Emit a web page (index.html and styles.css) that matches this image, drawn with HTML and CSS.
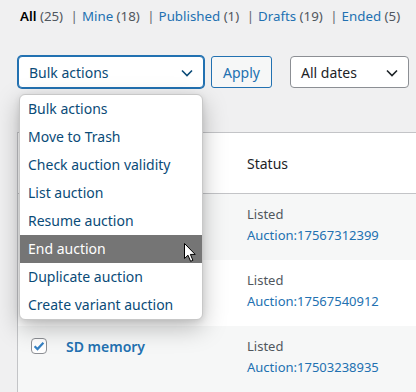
FILE: index.html
```html
<!DOCTYPE html>
<html lang="en">
<head>
  <meta charset="UTF-8" />
  <title>Auctions</title>
  <link rel="stylesheet" href="styles.css">
</head>
<body>
  <div class="wrap">

    <ul class="subsubsub">
      <li class="current"><a href="#">All <span class="count">(25)</span></a> |</li>
      <li><a href="#">Mine <span class="count">(18)</span></a> |</li>
      <li><a href="#">Published <span class="count">(1)</span></a> |</li>
      <li><a href="#">Drafts <span class="count">(19)</span></a> |</li>
      <li><a href="#">Ended <span class="count">(5)</span></a></li>
    </ul>

    <div class="tablenav">
      <div class="select select-focus">
        <span>Bulk actions</span>
        <svg class="chevron" width="14" height="14" viewBox="0 0 14 14"><path d="M2 4.5l5 5 5-5" fill="none" stroke="currentColor" stroke-width="1.6"/></svg>
      </div>
      <button class="button">Apply</button>
      <div class="select select-dates">
        <span>All dates</span>
        <svg class="chevron" width="14" height="14" viewBox="0 0 14 14"><path d="M2 4.5l5 5 5-5" fill="none" stroke="currentColor" stroke-width="1.6"/></svg>
      </div>
    </div>

    <table class="list">
      <thead>
        <tr>
          <th class="col-cb"></th>
          <th class="col-name"></th>
          <th class="col-status">Status</th>
        </tr>
      </thead>
      <tbody>
        <tr class="alt">
          <td class="col-cb"></td>
          <td class="col-name"></td>
          <td class="col-status">Listed<br><a href="#">Auction:17567312399</a></td>
        </tr>
        <tr>
          <td class="col-cb"></td>
          <td class="col-name"></td>
          <td class="col-status">Listed<br><a href="#">Auction:17567540912</a></td>
        </tr>
        <tr class="alt">
          <td class="col-cb">
            <span class="cb checked">
              <svg width="14" height="14" viewBox="0 0 14 14"><path d="M2.6 7.2l2.9 2.9 5.9-6.4" fill="none" stroke="#3582c4" stroke-width="2.2"/></svg>
            </span>
          </td>
          <td class="col-name"><a href="#">SD memory</a></td>
          <td class="col-status">Listed<br><a href="#">Auction:17503238935</a></td>
        </tr>
      </tbody>
    </table>

    <!-- open select list -->
    <ul class="dropdown">
      <li>Bulk actions</li>
      <li>Move to Trash</li>
      <li>Check auction validity</li>
      <li>List auction</li>
      <li>Resume auction</li>
      <li class="hover">End auction</li>
      <li>Duplicate auction</li>
      <li>Create variant auction</li>
    </ul>

    <svg class="cursor" width="13" height="20" viewBox="0 0 13 20">
      <path d="M0.5 0.5 L0.5 15.5 L4 12.2 L6.6 18.3 L8.9 17.3 L6.4 11.4 L11.2 11.4 Z" fill="#fff" stroke="#000" stroke-width="1" stroke-linejoin="round"/>
    </svg>

  </div>
</body>
</html>
```

FILE: styles.css
```css
html, body { margin: 0; overflow: hidden; }
body {
  background: #f0f0f1;
  font-family: "Noto Sans", "Open Sans", sans-serif;
  font-size: 13px;
  color: #3c434a;
}
a { color: #2271b1; text-decoration: none; }

.wrap {
  position: relative;
  padding: 3px 0 0 17px;
}

/* status filter links */
.subsubsub {
  list-style: none;
  margin: 0;
  padding: 0 0 0 3px;
  display: flex;
  font-size: 13.3px;
  line-height: 26px;
  color: #646970;
  white-space: pre;
}
.subsubsub li { margin-right: 4px; }
.subsubsub a { margin-right: 4px; }
.subsubsub .count { color: #50575e; }
.subsubsub .current a { color: #000; font-weight: 600; }
.subsubsub .current .count { font-weight: 400; color: #50575e; }

/* bulk actions row */
.tablenav {
  display: flex;
  margin-top: 27px;
  height: 32px;
}
.select {
  box-sizing: border-box;
  height: 32px;
  display: flex;
  align-items: center;
  justify-content: space-between;
  padding: 0 9px 0 10px;
  background: #fff;
  border: 1px solid #8c8f94;
  border-radius: 4px;
  font-size: 14px;
  color: #2c3338;
}
.select-focus {
  margin-left: 1px;
  width: 186px;
  border-color: #2271b1;
  box-shadow: 0 0 0 1px #2271b1;
  color: #0a4b78;
}
.select-dates { width: 119px; margin-left: 18px; color: #1d2327; }
.chevron { margin-top: 1px; }
.button {
  box-sizing: border-box;
  margin-left: 7px;
  width: 61px;
  height: 32px;
  background: #f6f7f7;
  border: 1px solid #2271b1;
  border-radius: 3px;
  color: #2271b1;
  font-family: inherit;
  font-size: 14px;
  padding: 0;
}

/* list table */
.list {
  margin-top: 44px;
  width: 440px;
  table-layout: fixed;
  border-collapse: collapse;
  border: 1px solid #c3c4c7;
  background: #fff;
}
.list th {
  height: 60px;
  padding: 0 10px;
  text-align: left;
  font-weight: 400;
  font-size: 14px;
  color: #1d2327;
  border-bottom: 1px solid #c3c4c7;
}
.list td {
  vertical-align: top;
  padding: 10px 10px 14px;
  line-height: 21px;
  color: #50575e;
}
.list tr.alt td { background: #f6f7f7; }
.list .col-cb { width: 18px; padding-left: 13px; padding-right: 7px; }
.list .col-name { width: 161px; }
.list td.col-name a { font-weight: 600; font-size: 14px; }
.cb {
  display: inline-flex;
  align-items: center;
  justify-content: center;
  box-sizing: border-box;
  width: 16px;
  height: 16px;
  margin-top: 2px;
  border: 1px solid #8c8f94;
  border-radius: 4px;
  background: #fff;
  vertical-align: top;
}

/* native select popup */
.dropdown {
  position: absolute;
  left: 19px;
  top: 94px;
  width: 184px;
  margin: 0;
  padding: 0;
  list-style: none;
  background: #fff;
  border: 1px solid #c8c8c8;
  box-sizing: border-box;
  border-radius: 6px;
  overflow: hidden;
  box-shadow: 0 8px 24px rgba(0,0,0,0.25), 0 2px 6px rgba(0,0,0,0.1);
  font-size: 14px;
  color: #0a4b78;
}
.dropdown li {
  height: 28px;
  line-height: 28px;
  padding-left: 8px;
  white-space: nowrap;
}
.dropdown li.hover { background: #757575; color: #fff; }

.cursor {
  position: absolute;
  left: 184px;
  top: 243px;
}
```
